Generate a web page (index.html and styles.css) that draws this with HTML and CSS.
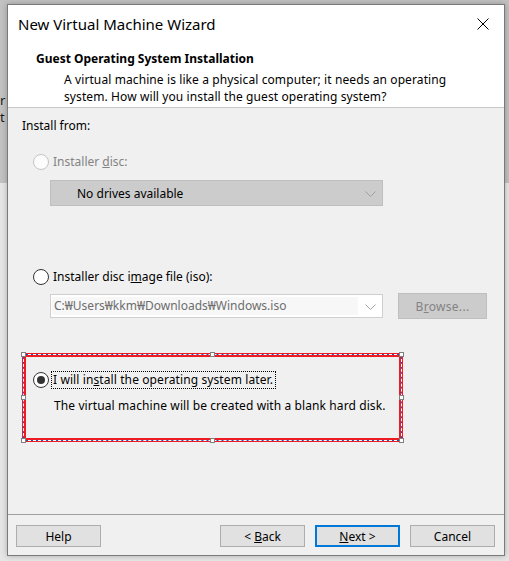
FILE: index.html
```html
<!DOCTYPE html>
<html>
<head>
<meta charset="utf-8">
<link rel="stylesheet" href="styles.css">
</head>
<body>
<div class="desktop">
  <div class="bg-text bg-r">r</div>
  <div class="bg-text bg-t">t</div>
  <div class="window">
    <div class="top">
      <div class="titlebar">
        <span class="title">New Virtual Machine Wizard</span>
        <svg class="close" width="12" height="12" viewBox="0 0 12 12"><path d="M0.5 0.5L11.5 11.5M11.5 0.5L0.5 11.5" stroke="#000" stroke-width="1" fill="none"/></svg>
      </div>
      <div class="h-title">Guest Operating System Installation</div>
      <div class="h-desc">A virtual machine is like a physical computer; it needs an operating<br>system. How will you install the guest operating system?</div>
    </div>
    <div class="content">
      <div class="label">Install from:</div>
      <div class="radio-row disabled row1">
        <span class="radio"></span>
        <span class="rtext">Installer <u>d</u>isc:</span>
      </div>
      <div class="combo combo-disabled">
        <span class="combo-text">No drives available</span>
        <svg class="chev" width="11" height="6" viewBox="0 0 11 6"><path d="M0.5 0.5L5.5 5.5L10.5 0.5" stroke="#a0a0a0" stroke-width="1" fill="none"/></svg>
      </div>
      <div class="radio-row row2">
        <span class="radio"></span>
        <span class="rtext">Installer disc i<u>m</u>age file (iso):</span>
      </div>
      <div class="iso-row">
        <div class="combo combo-iso">
          <span class="iso-field">C:₩Users₩kkm₩Downloads₩Windows.iso</span>
          <svg class="chev" width="11" height="6" viewBox="0 0 11 6"><path d="M0.5 0.5L5.5 5.5L10.5 0.5" stroke="#a8a8a8" stroke-width="1" fill="none"/></svg>
        </div>
        <div class="browse"><span>B<u>r</u>owse...</span></div>
      </div>
      <div class="later">
        <div class="radio-row row3">
          <span class="radio checked"></span>
          <span class="rtext focus">I will in<u>s</u>tall the operating system later.</span>
        </div>
        <div class="later-desc">The virtual machine will be created with a blank hard disk.</div>
        <div class="annot">
          <span class="h h-tl"></span><span class="h h-tm"></span><span class="h h-tr"></span>
          <span class="h h-ml"></span><span class="h h-mr"></span>
          <span class="h h-bl"></span><span class="h h-bm"></span><span class="h h-br"></span>
        </div>
      </div>
    </div>
    <div class="footer">
      <div class="btn"><span>Help</span></div>
      <div class="spacer"></div>
      <div class="btn"><span>&lt; <u>B</u>ack</span></div>
      <div class="btn primary"><span><u>N</u>ext &gt;</span></div>
      <div class="btn"><span>Cancel</span></div>
    </div>
  </div>
</div>
</body>
</html>
```

FILE: styles.css
```css
html, body {
  margin: 0;
  padding: 0;
}
body {
  width: 509px;
  height: 561px;
  overflow: hidden;
  background: linear-gradient(to bottom, #c2c2c2 0, #c2c2c2 183px, #e6e6e6 183px, #e6e6e6 100%);
  font-family: "Noto Sans", "Open Sans", sans-serif;
  font-size: 12px;
  color: #000;
}
.desktop {
  position: relative;
  padding: 4px 0 0 7px;
}
.bg-text {
  position: absolute;
  left: 0;
  font-size: 13px;
  line-height: 15px;
  color: #1a1a1a;
}
.bg-r { top: 93px; }
.bg-t { top: 110px; }
.window {
  position: relative;
  width: 496px;
  height: 550px;
  border: 1px solid #7a7a7a;
  background: #f0f0f0;
  display: flex;
  flex-direction: column;
  box-shadow: 0 0 6px rgba(0,0,0,0.25);
}
.top {
  background: #fff;
  border-bottom: 1px solid #c8c8c8;
  height: 103px;
  box-sizing: border-box;
  flex: none;
}
.titlebar {
  display: flex;
  align-items: center;
  justify-content: space-between;
  padding: 9px 15px 0 10px;
  height: 20px;
}
.title {
  font-size: 15px;
  line-height: 20px;
  color: #000;
}
.close {
  display: block;
}
.h-title {
  font-weight: bold;
  font-size: 12px;
  line-height: 18px;
  margin: 16px 0 0 28px;
}
.h-desc {
  line-height: 17px;
  margin: 3px 0 0 56px;
  letter-spacing: 0.1px;
}
.content {
  flex: 1;
  padding: 9px 0 0 14px;
}
.label {
  line-height: 17px;
}
.radio-row {
  display: flex;
  align-items: center;
  height: 17px;
  margin-left: 11px;
}
.row1 { margin-top: 19px; }
.row2 { margin-top: 62px; }
.radio {
  width: 14px;
  height: 14px;
  border: 1px solid #333;
  border-radius: 50%;
  background: #fff;
  margin-right: 4px;
  flex: none;
  position: relative;
}
.disabled .radio {
  border-color: #c4c4c4;
  background: #fcfcfc;
}
.disabled .rtext {
  color: #838383;
}
.radio.checked::after {
  content: "";
  position: absolute;
  left: 3px;
  top: 3px;
  width: 8px;
  height: 8px;
  border-radius: 50%;
  background: #333;
}
.combo {
  position: relative;
  box-sizing: border-box;
  width: 333px;
  display: flex;
  align-items: center;
}
.combo-disabled {
  margin: 10px 0 0 28px;
  height: 26px;
  background: #cccccc;
  border: 1px solid #bfbfbf;
}
.combo-text {
  padding-left: 26px;
  line-height: 17px;
}
.chev {
  position: absolute;
  right: 6px;
  top: 50%;
  margin-top: -2px;
}
.iso-row {
  display: flex;
  align-items: center;
  height: 26px;
  margin: 8px 0 0 28px;
}
.combo-iso {
  height: 24px;
  background: #fff;
  border: 1px solid #cfcfcf;
  padding: 2px 0 2px 1px;
}
.iso-field {
  width: 306px;
  height: 18px;
  line-height: 18px;
  background: #f7f7f7;
  color: #6d6d6d;
  padding-left: 2px;
  box-sizing: border-box;
}
.browse {
  margin-left: 15px;
  width: 89px;
  height: 26px;
  box-sizing: border-box;
  background: #cccccc;
  border: 1px solid #bfbfbf;
  color: #838383;
  display: flex;
  align-items: center;
  justify-content: center;
  letter-spacing: 0.3px;
}
.later {
  position: relative;
  margin-top: 34px;
  width: 381px;
  height: 89px;
  box-sizing: border-box;
  padding: 18px 0 0 11px;
}
.row3 {
  height: 18px;
  margin-left: 0;
}
.row3 .radio {
  margin-right: 3px;
}
.focus {
  outline: 1px dotted #000;
  outline-offset: 0;
  line-height: 16px;
  padding: 0 2px 0 1px;
  letter-spacing: 0.1px;
}
.later-desc {
  line-height: 17px;
  margin: 8px 0 0 21px;
  letter-spacing: 0.1px;
}
.annot {
  position: absolute;
  inset: 0;
  border: 4px solid #ed1c24;
}
.annot::before {
  content: "";
  position: absolute;
  inset: -3px;
  border: 1px solid #2d4fb5;
}
.annot::after {
  content: "";
  position: absolute;
  inset: -3px;
  border: 1px dashed #fff;
}
.h {
  position: absolute;
  width: 3px;
  height: 3px;
  background: #fff;
  border: 1px solid #808080;
  z-index: 2;
}
.h-tl { left: -5px; top: -5px; }
.h-tm { left: 184px; top: -5px; }
.h-tr { right: -5px; top: -5px; }
.h-ml { left: -5px; top: 38px; }
.h-mr { right: -5px; top: 38px; }
.h-bl { left: -5px; bottom: -5px; }
.h-bm { left: 184px; bottom: -5px; }
.h-br { right: -5px; bottom: -5px; }
.footer {
  border-top: 1px solid #a0a0a0;
  height: 41px;
  box-sizing: border-box;
  padding: 10px 9px 0 8px;
  display: flex;
  gap: 10px;
  flex: none;
}
.spacer {
  flex: 1;
}
.btn {
  width: 85px;
  height: 22px;
  box-sizing: border-box;
  background: #e1e1e1;
  border: 1px solid #adadad;
  display: flex;
  align-items: center;
  justify-content: center;
}
.btn.primary {
  border: 2px solid #0078d7;
}
```
